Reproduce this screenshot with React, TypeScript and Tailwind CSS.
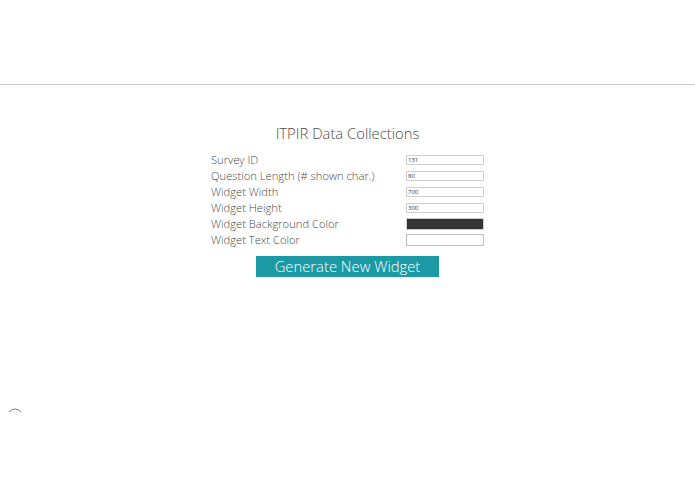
const rows = [
  { id: 'survey', label: 'Survey ID', value: '131', kind: 'text' },
  { id: 'qlen', label: 'Question Length (# shown char.)', value: '80', kind: 'text' },
  { id: 'width', label: 'Widget Width', value: '700', kind: 'text' },
  { id: 'height', label: 'Widget Height', value: '300', kind: 'text' },
  { id: 'bg', label: 'Widget Background Color', value: '#333333', kind: 'dark' },
  { id: 'fg', label: 'Widget Text Color', value: '#ffffff', kind: 'light' },
];

export default function App() {
  return (
    <div
      className="min-h-[494px] bg-white text-[#4a4a4a]"
      style={{ fontFamily: '"Open Sans", "Liberation Sans", sans-serif' }}
    >
      <div className="h-[85px] border-b border-[#c8c8c8]" />

      <div className="mx-auto mt-[37px] w-[273px]">
        <h1 className="text-center text-[14.8px] leading-[22px] font-light">
          ITPIR Data Collections
        </h1>

        <div className="mt-[8px] grid grid-cols-[195px_78px]">
          {rows.map((row) => (
            <div className="contents" key={row.id}>
              <div className="h-[16px] text-[11.2px] leading-[16px] font-light whitespace-nowrap">
                {row.label}
              </div>
              <div className="flex h-[16px] items-center">
                {row.kind === 'text' && (
                  <div className="flex h-[10px] w-[78px] items-center border border-[#cfcfcf] bg-white pl-[1px] text-[6px] leading-none text-[#333]">
                    {row.value}
                  </div>
                )}
                {row.kind === 'dark' && (
                  <div className="h-[12px] w-[78px] border border-[#cfcfcf] bg-[#333333]" />
                )}
                {row.kind === 'light' && (
                  <div className="h-[12px] w-[78px] border border-[#bdbdbd] bg-white" />
                )}
              </div>
            </div>
          ))}
        </div>

        <div className="mt-[8px] flex justify-center">
          <button className="h-[21px] w-[183px] bg-[#1b99a5] text-[14.8px] leading-[21px] font-light text-white">
            Generate New Widget
          </button>
        </div>
      </div>

      <div className="mt-[130px] pl-[8px]">
        <svg width="14" height="6" viewBox="0 0 14 6">
          <path d="M1 5 Q7 -1 13 5" fill="none" stroke="#6b7f95" strokeWidth="1" />
        </svg>
      </div>
    </div>
  );
}
